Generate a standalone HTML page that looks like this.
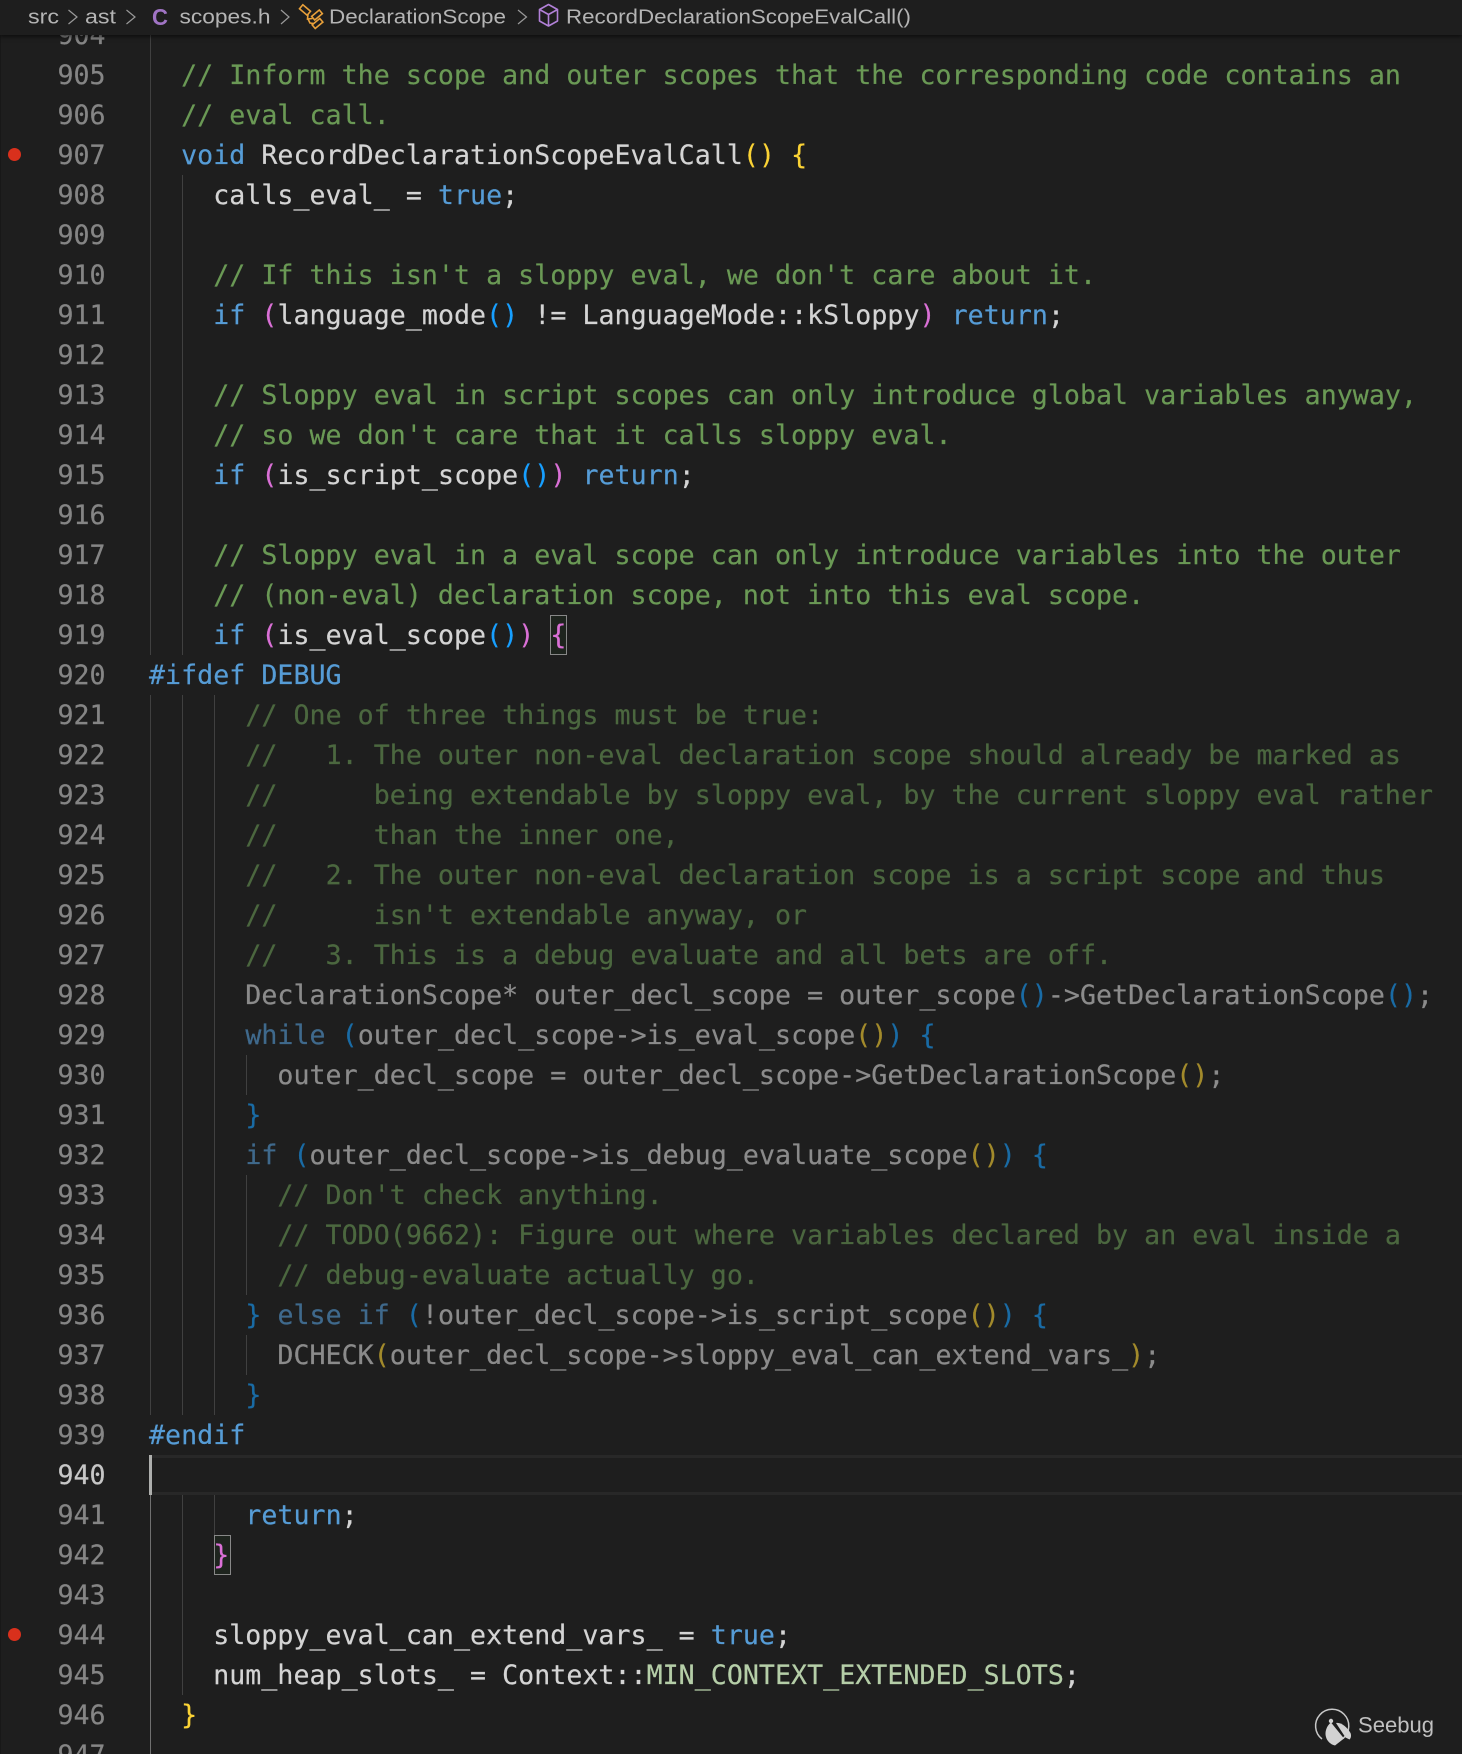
<!DOCTYPE html>
<html lang="en">
<head>
<meta charset="utf-8">
<title>scopes.h</title>
<style>
html,body{margin:0;padding:0;background:#1e1e1e;}
#root{position:relative;width:1462px;height:1754px;overflow:hidden;background:#1e1e1e;}
#code{position:absolute;left:149px;top:16px;font:26.6px/40px "DejaVu Sans Mono","Liberation Mono",monospace;letter-spacing:.04px;color:#d4d4d4;-webkit-text-stroke:.2px;}
#nums{position:absolute;left:40px;width:65.5px;top:16px;text-align:right;font:26.6px/40px "DejaVu Sans Mono","Liberation Mono",monospace;color:#858585;-webkit-text-stroke:.2px;}
#nums div{height:40px;}
#nums .cur{color:#c6c6c6;}
.l{height:40px;white-space:pre;}
.c{color:#6a9955}.k{color:#569cd6}.y{color:#fbd335}.m{color:#da70d6}.b{color:#179fff}.n{color:#b5cea8}
.d{opacity:.6}
.g{position:absolute;width:1px;background:#404040;}
.box{position:absolute;box-sizing:border-box;width:17px;height:40px;border:1px solid #888;background:#1e241e;}
.bp{position:absolute;left:7.5px;width:13px;height:13px;border-radius:50%;background:#d9301c;}
#bar{position:absolute;left:0;top:0;width:1462px;height:35px;background:#1e1e1e;box-shadow:0 2px 4px rgba(0,0,0,.55);}
svg{position:absolute;left:0;top:0;overflow:visible;}
</style>
</head>
<body>
<div id="root">
<div style="position:absolute;left:0;top:0;width:1px;height:1754px;background:#181818"></div>
<!-- current line -->
<div style="position:absolute;left:152px;top:1455px;width:1310px;height:40px;box-sizing:border-box;border-top:3px solid #282828;border-bottom:3px solid #282828"></div>
<!-- guides -->
<div class="g" style="left:150px;top:15px;height:640px"></div>
<div class="g" style="left:150px;top:695px;height:720px"></div>
<div class="g" style="left:150px;top:1495px;height:259px;background:#707070"></div>
<div class="g" style="left:182px;top:175px;height:480px"></div>
<div class="g" style="left:182px;top:695px;height:720px"></div>
<div class="g" style="left:182px;top:1495px;height:200px"></div>
<div class="g" style="left:214px;top:695px;height:720px"></div>
<div class="g" style="left:214px;top:1495px;height:40px"></div>
<div class="g" style="left:246px;top:1055px;height:40px"></div>
<div class="g" style="left:246px;top:1175px;height:120px"></div>
<div class="g" style="left:246px;top:1335px;height:40px"></div>
<!-- bracket match -->
<div class="box" style="left:550px;top:615px"></div>
<div class="box" style="left:214px;top:1535px"></div>
<!-- cursor -->
<div style="position:absolute;left:149px;top:1455px;width:3px;height:40px;background:#aeafad"></div>
<!-- breakpoints -->
<div class="bp" style="top:148px"></div>
<div class="bp" style="top:1628px"></div>
<div id="nums">
<div>904</div><div>905</div><div>906</div><div>907</div><div>908</div><div>909</div><div>910</div><div>911</div><div>912</div><div>913</div><div>914</div><div>915</div><div>916</div><div>917</div><div>918</div><div>919</div><div>920</div><div>921</div><div>922</div><div>923</div><div>924</div><div>925</div><div>926</div><div>927</div><div>928</div><div>929</div><div>930</div><div>931</div><div>932</div><div>933</div><div>934</div><div>935</div><div>936</div><div>937</div><div>938</div><div>939</div><div class="cur">940</div><div>941</div><div>942</div><div>943</div><div>944</div><div>945</div><div>946</div><div>947</div>
</div>
<div id="code">
<div class="l"> </div>
<div class="l">  <span class="c">// Inform the scope and outer scopes that the corresponding code contains an</span></div>
<div class="l">  <span class="c">// eval call.</span></div>
<div class="l">  <span class="k">void</span> RecordDeclarationScopeEvalCall<span class="y">()</span> <span class="y">{</span></div>
<div class="l">    calls_eval_ = <span class="k">true</span>;</div>
<div class="l"> </div>
<div class="l">    <span class="c">// If this isn't a sloppy eval, we don't care about it.</span></div>
<div class="l">    <span class="k">if</span> <span class="m">(</span>language_mode<span class="b">()</span> != LanguageMode::kSloppy<span class="m">)</span> <span class="k">return</span>;</div>
<div class="l"> </div>
<div class="l">    <span class="c">// Sloppy eval in script scopes can only introduce global variables anyway,</span></div>
<div class="l">    <span class="c">// so we don't care that it calls sloppy eval.</span></div>
<div class="l">    <span class="k">if</span> <span class="m">(</span>is_script_scope<span class="b">()</span><span class="m">)</span> <span class="k">return</span>;</div>
<div class="l"> </div>
<div class="l">    <span class="c">// Sloppy eval in a eval scope can only introduce variables into the outer</span></div>
<div class="l">    <span class="c">// (non-eval) declaration scope, not into this eval scope.</span></div>
<div class="l">    <span class="k">if</span> <span class="m">(</span>is_eval_scope<span class="b">()</span><span class="m">)</span> <span class="m">{</span></div>
<div class="l"><span class="k">#ifdef DEBUG</span></div>
<div class="l d">      <span class="c">// One of three things must be true:</span></div>
<div class="l d">      <span class="c">//   1. The outer non-eval declaration scope should already be marked as</span></div>
<div class="l d">      <span class="c">//      being extendable by sloppy eval, by the current sloppy eval rather</span></div>
<div class="l d">      <span class="c">//      than the inner one,</span></div>
<div class="l d">      <span class="c">//   2. The outer non-eval declaration scope is a script scope and thus</span></div>
<div class="l d">      <span class="c">//      isn't extendable anyway, or</span></div>
<div class="l d">      <span class="c">//   3. This is a debug evaluate and all bets are off.</span></div>
<div class="l d">      DeclarationScope* outer_decl_scope = outer_scope<span class="b">()</span>-&gt;GetDeclarationScope<span class="b">()</span>;</div>
<div class="l d">      <span class="k">while</span> <span class="b">(</span>outer_decl_scope-&gt;is_eval_scope<span class="y">()</span><span class="b">)</span> <span class="b">{</span></div>
<div class="l d">        outer_decl_scope = outer_decl_scope-&gt;GetDeclarationScope<span class="y">()</span>;</div>
<div class="l d">      <span class="b">}</span></div>
<div class="l d">      <span class="k">if</span> <span class="b">(</span>outer_decl_scope-&gt;is_debug_evaluate_scope<span class="y">()</span><span class="b">)</span> <span class="b">{</span></div>
<div class="l d">        <span class="c">// Don't check anything.</span></div>
<div class="l d">        <span class="c">// TODO(9662): Figure out where variables declared by an eval inside a</span></div>
<div class="l d">        <span class="c">// debug-evaluate actually go.</span></div>
<div class="l d">      <span class="b">}</span> <span class="k">else</span> <span class="k">if</span> <span class="b">(</span>!outer_decl_scope-&gt;is_script_scope<span class="y">()</span><span class="b">)</span> <span class="b">{</span></div>
<div class="l d">        DCHECK<span class="y">(</span>outer_decl_scope-&gt;sloppy_eval_can_extend_vars_<span class="y">)</span>;</div>
<div class="l d">      <span class="b">}</span></div>
<div class="l"><span class="k">#endif</span></div>
<div class="l"> </div>
<div class="l">      <span class="k">return</span>;</div>
<div class="l">    <span class="m">}</span></div>
<div class="l"> </div>
<div class="l">    sloppy_eval_can_extend_vars_ = <span class="k">true</span>;</div>
<div class="l">    num_heap_slots_ = Context::<span class="n">MIN_CONTEXT_EXTENDED_SLOTS</span>;</div>
<div class="l">  <span class="y">}</span></div>
<div class="l"> </div>
</div>
<!-- breadcrumb -->
<div id="bar"></div>
<svg width="1462" height="1754" viewBox="0 0 1462 1754" font-family="'Liberation Sans',sans-serif" font-size="20" fill="#b4b4b4">
<text x="28" y="23.5" textLength="31" lengthAdjust="spacingAndGlyphs">src</text>
<polyline points="68.5,10 77,17 68.5,24" fill="none" stroke="#9a9a9a" stroke-width="1.2"/>
<text x="85" y="23.5" textLength="31" lengthAdjust="spacingAndGlyphs">ast</text>
<polyline points="126.5,10 135,17 126.5,24" fill="none" stroke="#9a9a9a" stroke-width="1.2"/>
<text x="152" y="25" font-size="23" font-weight="700" fill="#a074c4" textLength="16" lengthAdjust="spacingAndGlyphs">C</text>
<text x="179.5" y="23.5" textLength="91" lengthAdjust="spacingAndGlyphs">scopes.h</text>
<polyline points="281,10 289,17 281,24" fill="none" stroke="#9a9a9a" stroke-width="1.2"/>
<g fill="none" stroke="#e8a03a" stroke-width="1.6">
<rect x="-5" y="-2.6" width="10" height="5.2" transform="translate(305,10) rotate(40)"/>
<rect x="-5" y="-2.4" width="10" height="4.8" transform="translate(317,15) rotate(-40)"/>
<rect x="-5" y="-2.4" width="10" height="4.8" transform="translate(317.5,23.5) rotate(-40)"/>
<path d="M308,14 L307.5,19 L312.5,18.5 M308,19 L310,23 L313.5,23.5"/>
</g>
<text x="329" y="23.5" textLength="177" lengthAdjust="spacingAndGlyphs">DeclarationScope</text>
<polyline points="518,10 526.5,17 518,24" fill="none" stroke="#9a9a9a" stroke-width="1.2"/>
<g fill="none" stroke="#b180d7" stroke-width="1.6" stroke-linejoin="round">
<path d="M548.5,4.5 L557.5,9.5 L557.5,21 L548.5,26 L539.5,21 L539.5,9.5 Z"/>
<path d="M539.5,9.5 L548.5,14.5 L557.5,9.5 M548.5,14.5 L548.5,26"/>
</g>
<text x="566" y="23.5" textLength="345" lengthAdjust="spacingAndGlyphs">RecordDeclarationScopeEvalCall()</text>
<!-- watermark -->
<path d="M1343,1738.5 A16.6,16.6 0 1 0 1322,1739" fill="none" stroke="#c8c8c8" stroke-width="1.5"/>
<g fill="#d2d2d2">
<path d="M1331,1722.5 C1326.5,1726 1324.5,1732 1326,1737 C1327,1741 1330.5,1744.5 1335,1745.5 L1344,1738.5 Z"/>
<path d="M1336,1723 C1341,1722 1347,1727 1350.5,1733 C1351.5,1735.5 1351,1738 1349.5,1739.5 L1345.5,1737.5 Z"/>
<circle cx="1331" cy="1721" r="2.2"/>
</g>
<text x="1358" y="1732.5" font-size="22" fill="#c0c0c0" textLength="76" lengthAdjust="spacingAndGlyphs">Seebug</text>
</svg>
</div>
</body>
</html>
